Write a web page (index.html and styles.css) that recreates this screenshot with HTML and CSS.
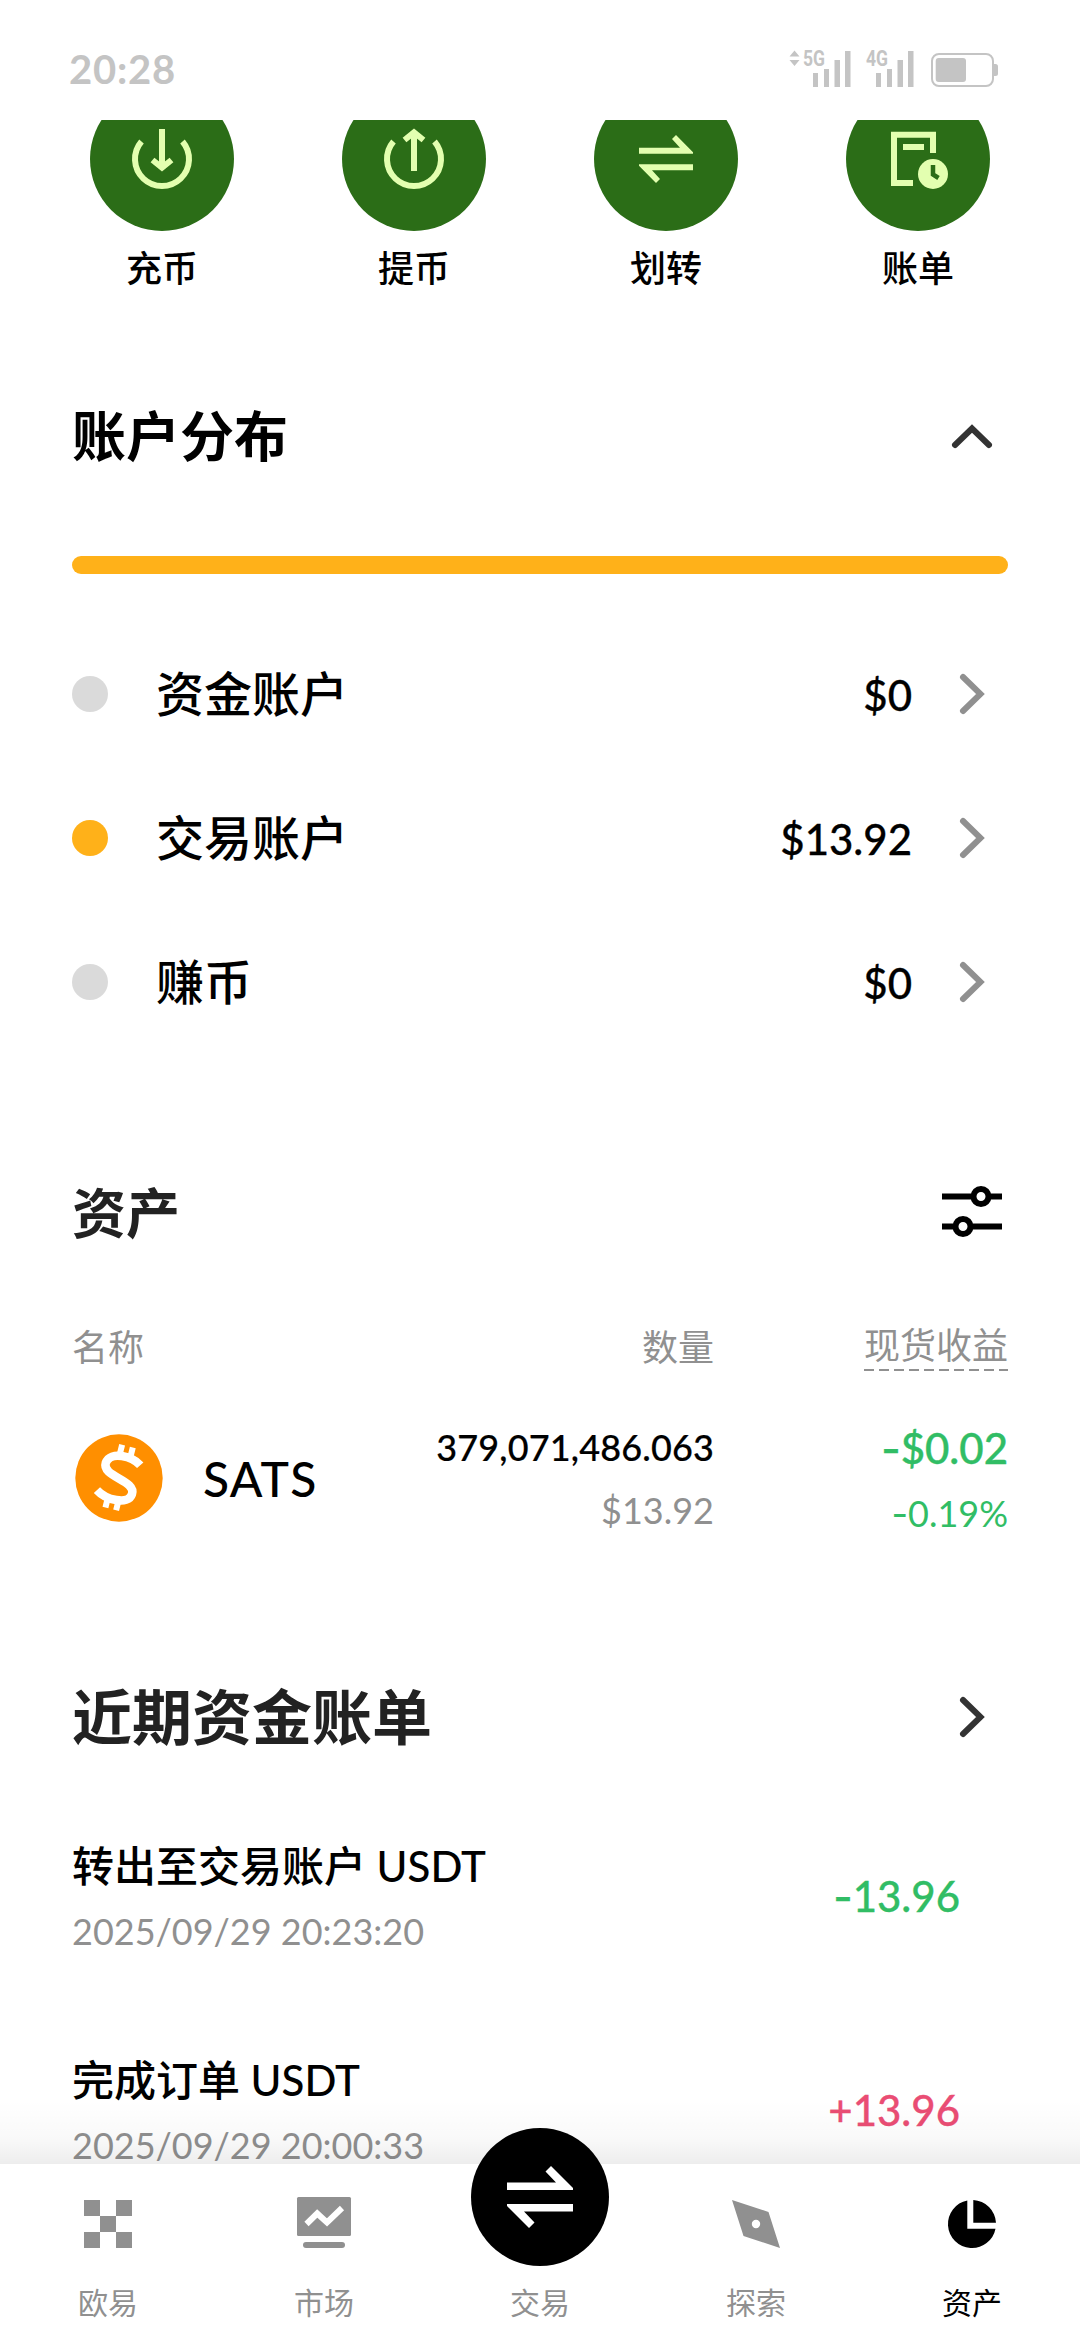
FILE: index.html
```html
<!DOCTYPE html>
<html lang="zh-CN">
<head>
<meta charset="utf-8">
<title>资产</title>
<link rel="stylesheet" href="styles.css">
</head>
<body>
<header class="status">
  <span class="clock">20:28</span>
  <svg class="status-icons" width="214" height="62" viewBox="787 38 214 62">
    <path d="M789.5 56.5l5-6 5 6zM789.5 60l5 6 5-6z"/>
    <text class="net" x="803" y="66" textLength="22" lengthAdjust="spacingAndGlyphs">5G</text>
    <path d="M813 73h5v14h-5zM824 69h5v18h-5zM834.500 60h5.500v27h-5.500zM845 51h5.500v36h-5.500z"/>
    <text class="net" x="866" y="66" textLength="22" lengthAdjust="spacingAndGlyphs">4G</text>
    <path d="M876 73h5v14h-5zM887 69h5v18h-5zM897.500 60h5.500v27h-5.500zM908 51h5.500v36h-5.500z"/>
    <rect class="cell" x="932" y="54" width="61" height="32" rx="7"/>
    <rect x="935.700" y="58" width="30.300" height="24" rx="3"/>
    <path d="M994 64h1.500a2.500 2.500 0 0 1 2.500 2.500v7a2.500 2.500 0 0 1-2.500 2.500h-1.500z"/>
  </svg>
</header>

<main class="content">
  <div class="actions">
    <div class="action">
      <svg class="disc" viewBox="-72 -72 144 144">
        <path d="M-20.500-17.500A27 27 0 1 0 20.500-17.500M0-30V8M-9.500 1L0 8.700 9.500 1"/>
      </svg>
      <span>充币</span>
    </div>
    <div class="action">
      <svg class="disc" viewBox="-72 -72 144 144">
        <path d="M-20.500-17.500A27 27 0 1 0 20.500-17.500M0 12V-26M-9.500-19L0-26.700 9.500-19"/>
      </svg>
      <span>提币</span>
    </div>
    <div class="action">
      <svg class="disc" viewBox="-72 -72 144 144">
        <path class="solid" d="M-27-11.200H14L6-20 10-24 27-6.800V-5.200H-27zM27 11.200H-14L-6 20-10 24-27 6.800V5.200H27z"/>
      </svg>
      <span>划转</span>
    </div>
    <div class="action">
      <svg class="disc" viewBox="-72 -72 144 144">
        <path d="M15-6V-24.300H-24V24H-5M-15-12H6"/>
        <circle class="solid" cx="15" cy="15" r="15"/>
        <path class="hand" d="M15 6V15.500L20.500 19"/>
      </svg>
      <span>账单</span>
    </div>
  </div>

  <section class="accounts">
    <div class="head">
      <h2>账户分布</h2>
      <svg class="arrow dark" width="72" height="72" viewBox="0 0 72 72"><path d="M19 45L36 28.500 53 45"/></svg>
    </div>
    <div class="bar"></div>
    <div class="account">
      <i class="dot"></i><span class="name">资金账户</span><span class="sum">$0</span>
      <svg class="arrow" width="72" height="72" viewBox="0 0 72 72"><path d="M27 19L44.500 36 27 53"/></svg>
    </div>
    <div class="account">
      <i class="dot on"></i><span class="name">交易账户</span><span class="sum">$13.92</span>
      <svg class="arrow" width="72" height="72" viewBox="0 0 72 72"><path d="M27 19L44.500 36 27 53"/></svg>
    </div>
    <div class="account">
      <i class="dot"></i><span class="name">赚币</span><span class="sum">$0</span>
      <svg class="arrow" width="72" height="72" viewBox="0 0 72 72"><path d="M27 19L44.500 36 27 53"/></svg>
    </div>
  </section>

  <section class="assets">
    <div class="head">
      <h2 class="soft">资产</h2>
      <svg class="sliders" width="72" height="72" viewBox="0 0 72 72">
        <path d="M6 19.500H37M53 19.500H66M6 49.500H19M35 49.500H66"/>
        <circle cx="45" cy="19.500" r="7.500"/><circle cx="27" cy="49.500" r="7.500"/>
      </svg>
    </div>
    <div class="cols labels">
      <span>名称</span><span class="right">数量</span><span class="right"><span class="dashed">现货收益</span></span>
    </div>
    <div class="cols asset">
      <div class="coin">
        <svg width="88" height="88" viewBox="-44 -44 88 88">
          <circle r="43.700" fill="#ff8f00"/>
          <g transform="rotate(14)" fill="none" stroke="#fff">
            <path stroke-width="8.500" d="M17.500-17.500C8-24-15-25-16.500-11.500C-17.500 3 17.500-2 16.500 12.500C15.500 25-8 24-18.500 17"/>
            <path stroke-width="6" d="M-5-33V-20M6-33V-20M-6 20V32M5 20V32"/>
          </g>
        </svg>
        <span>SATS</span>
      </div>
      <div class="right qty"><b>379,071,486.063</b><span>$13.92</span></div>
      <div class="right pnl"><b><i class="sign">-</i>$0.02</b><span><i class="sign">-</i>0.19%</span></div>
    </div>
  </section>

  <section class="bills">
    <div class="head">
      <h2 class="soft big">近期资金账单</h2>
      <svg class="arrow dark" width="72" height="72" viewBox="0 0 72 72"><path d="M27 19L44.500 36 27 53"/></svg>
    </div>
    <div class="bill">
      <div><p class="title">转出至交易账户 USDT</p><p class="date">2025/09/29 20:23:20</p></div>
      <span class="amount out"><i class="sign">-</i>13.96</span>
    </div>
    <div class="bill">
      <div><p class="title">完成订单 USDT</p><p class="date">2025/09/29 20:00:33</p></div>
      <span class="amount in">+13.96</span>
    </div>
  </section>
</main>

<nav class="tabs">
  <div class="tab">
    <svg viewBox="0 0 72 72"><path d="M12 12h16v16h-16zM44 12h16v16h-16zM28 28h16v16h-16zM12 44h16v16h-16zM44 44h16v16h-16z"/></svg>
    <span>欧易</span>
  </div>
  <div class="tab">
    <svg viewBox="0 0 72 72"><rect x="9" y="9" width="54" height="39" rx="1.500"/><rect x="15" y="54" width="42" height="6" rx="3"/><path class="trend" d="M18.500 36L29.200 25.500 39 34.500 54 20"/></svg>
    <span>市场</span>
  </div>
  <div class="tab">
    <svg class="trade" viewBox="-69 -69 138 138"><path d="M-33-14.500H16L5.500-25.500 11-31 33-9V-7H-33zM33 14.500H-16L-5.500 25.500-11 31-33 9V7H33z"/></svg>
    <span>交易</span>
  </div>
  <div class="tab">
    <svg viewBox="0 0 72 72"><path fill-rule="evenodd" d="M12 12L48.500 24 60 60 23.500 48zM40.200 36a4.200 4.200 0 1 0-8.400 0 4.200 4.200 0 1 0 8.400 0z"/></svg>
    <span>探索</span>
  </div>
  <div class="tab active">
    <svg viewBox="0 0 72 72"><path d="M31.300 12.500V40.700H59.500A24 24 0 1 1 31.300 12.500zM37.300 12A24 24 0 0 1 60 34.700H37.300z"/></svg>
    <span>资产</span>
  </div>
</nav>
</body>
</html>
```
FILE: styles.css
```css
* { box-sizing: border-box; margin: 0; padding: 0; }

body {
  display: flex;
  flex-direction: column;
  width: 1080px;
  height: 2344px;
  overflow: hidden;
  background: #fff;
  color: #000;
  font-family: Lato, "Noto Sans CJK SC", sans-serif;
  font-size: 36px;
}

svg { display: block; flex: none; }

/* status bar */
.status {
  display: flex;
  align-items: center;
  justify-content: space-between;
  flex: none;
  height: 120px;
  padding: 18px 79px 0 69px;
}
.clock { font-size: 40px; font-weight: 700; letter-spacing: .8px; color: #c4c4c4; line-height: 60px; }
.status-icons { fill: #c4c4c4; }
.net { font: 700 22px Roboto, sans-serif; }
.cell { fill: none; stroke: #c4c4c4; stroke-width: 2; }

/* scrolled page: cut under the status bar, runs on beneath the tabs */
.content { display: flow-root; flex: 1; min-height: 0; clip-path: inset(0 0 -20px); }

/* quick actions */
.actions {
  display: flex;
  justify-content: space-between;
  margin-top: -33px;
  padding: 0 90px;
}
.action {
  display: flex;
  flex-direction: column;
  align-items: center;
  gap: 12px;
  width: 144px;
  line-height: 50px;
  font-weight: 500;
}
.disc {
  width: 144px;
  height: 144px;
  border-radius: 50%;
  background: #2b6d17;
  fill: none;
  stroke: #e3ffb0;
  stroke-width: 6;
}
.disc .solid { fill: #e3ffb0; stroke: none; }
.disc .hand { stroke: #2b6d17; stroke-width: 4.5; }

/* sections */
.accounts, .assets, .bills { padding: 0 72px; }
.head {
  display: flex;
  align-items: center;
  justify-content: space-between;
  height: 80px;
}
h2 { padding-top: 2px; font-size: 54px; font-weight: 700; line-height: 80px; }
.soft { color: #222; }
.big { padding-top: 0; font-size: 60px; }
.arrow { fill: none; stroke: #909090; stroke-width: 6; stroke-linecap: round; }
.arrow.dark { stroke: #333; }

.accounts { margin-top: 103px; }
.bar {
  height: 18px;
  margin: 80px 0 48px;
  border-radius: 9px;
  background: #ffb119;
}
.account { display: flex; align-items: center; height: 144px; }
.dot { width: 36px; height: 36px; margin-right: 48px; border-radius: 50%; background: #dadada; }
.dot.on { background: #ffb119; }
.name { flex: 1; font-size: 48px; font-weight: 500; line-height: 64px; }
.sum { margin-right: 24px; padding-top: 2px; font-size: 42px; font-weight: 500; -webkit-text-stroke: .3px; }

.assets { margin-top: 119px; }
.sliders { fill: none; stroke: #000; stroke-width: 6; }
.cols { display: grid; grid-template-columns: 200px 442px 294px; }
.right { text-align: right; }
.labels { height: 50px; margin-top: 69px; color: #909090; line-height: 50px; }
.dashed {
  display: inline-block;
  vertical-align: top;
  padding-bottom: 3px;
  line-height: 46px;
  background: repeating-linear-gradient(90deg, #909090 0 10px, transparent 10px 15px) bottom / 100% 2px no-repeat;
}
.asset { margin-top: 44px; height: 124px; }
.coin {
  display: flex;
  align-items: center;
  gap: 40px;
  padding-left: 3px;
  height: 124px;
  font-size: 48px;
  font-weight: 500;
  letter-spacing: 1.4px;
}
.qty, .pnl { display: flex; flex-direction: column; line-height: 63px; }
.asset b { font-weight: 500; -webkit-text-stroke: .2px; }
.qty b { letter-spacing: .15px; }
.qty span { color: #909090; }
.pnl { color: #31bd65; }
.pnl b { font-size: 42px; line-height: 64px; -webkit-text-stroke: .4px; }
.pnl span { line-height: 66px; }
.sign { font-family: Inter, sans-serif; font-style: normal; line-height: 1; }

/* recent bills */
.bills { margin-top: 137px; }
.bill { display: flex; align-items: center; justify-content: space-between; height: 130px; margin-bottom: 84px; }
.bills .head { margin-bottom: 77px; }
.title { font-size: 42px; font-weight: 500; line-height: 64px; }
.date { margin: 14px 0; color: #909090; line-height: 38px; }
.amount { padding: 0 48px 7px 0; font-size: 42px; font-weight: 500; -webkit-text-stroke: .3px; }
.out { color: #31bd65; }
.in { color: #ea4d74; }

/* bottom tabs */
.tabs {
  position: relative;
  display: flex;
  flex: none;
  height: 180px;
  background: #fff;
  color: #909090;
  fill: #909090;
  font-size: 30px;
}
.tabs::before {
  content: "";
  position: absolute;
  left: 0;
  right: 0;
  bottom: 100%;
  height: 64px;
  background: linear-gradient(rgba(0, 0, 0, 0), rgba(0, 0, 0, .022) 60%, rgba(0, 0, 0, .07));
}
.tab {
  position: relative;
  display: flex;
  flex: 1;
  flex-direction: column;
  align-items: center;
  justify-content: space-between;
  padding: 24px 0 22px;
  line-height: 40px;
}
.tab svg { width: 72px; height: 72px; }
.tab .trend { fill: none; stroke: #fff; stroke-width: 6; }
.tab .trade {
  position: absolute;
  top: -36px;
  width: 138px;
  height: 138px;
  border-radius: 50%;
  background: #000;
  fill: #fff;
}
.tab .trade + span { margin-top: auto; }
.active { color: #000; fill: #000; }
```
